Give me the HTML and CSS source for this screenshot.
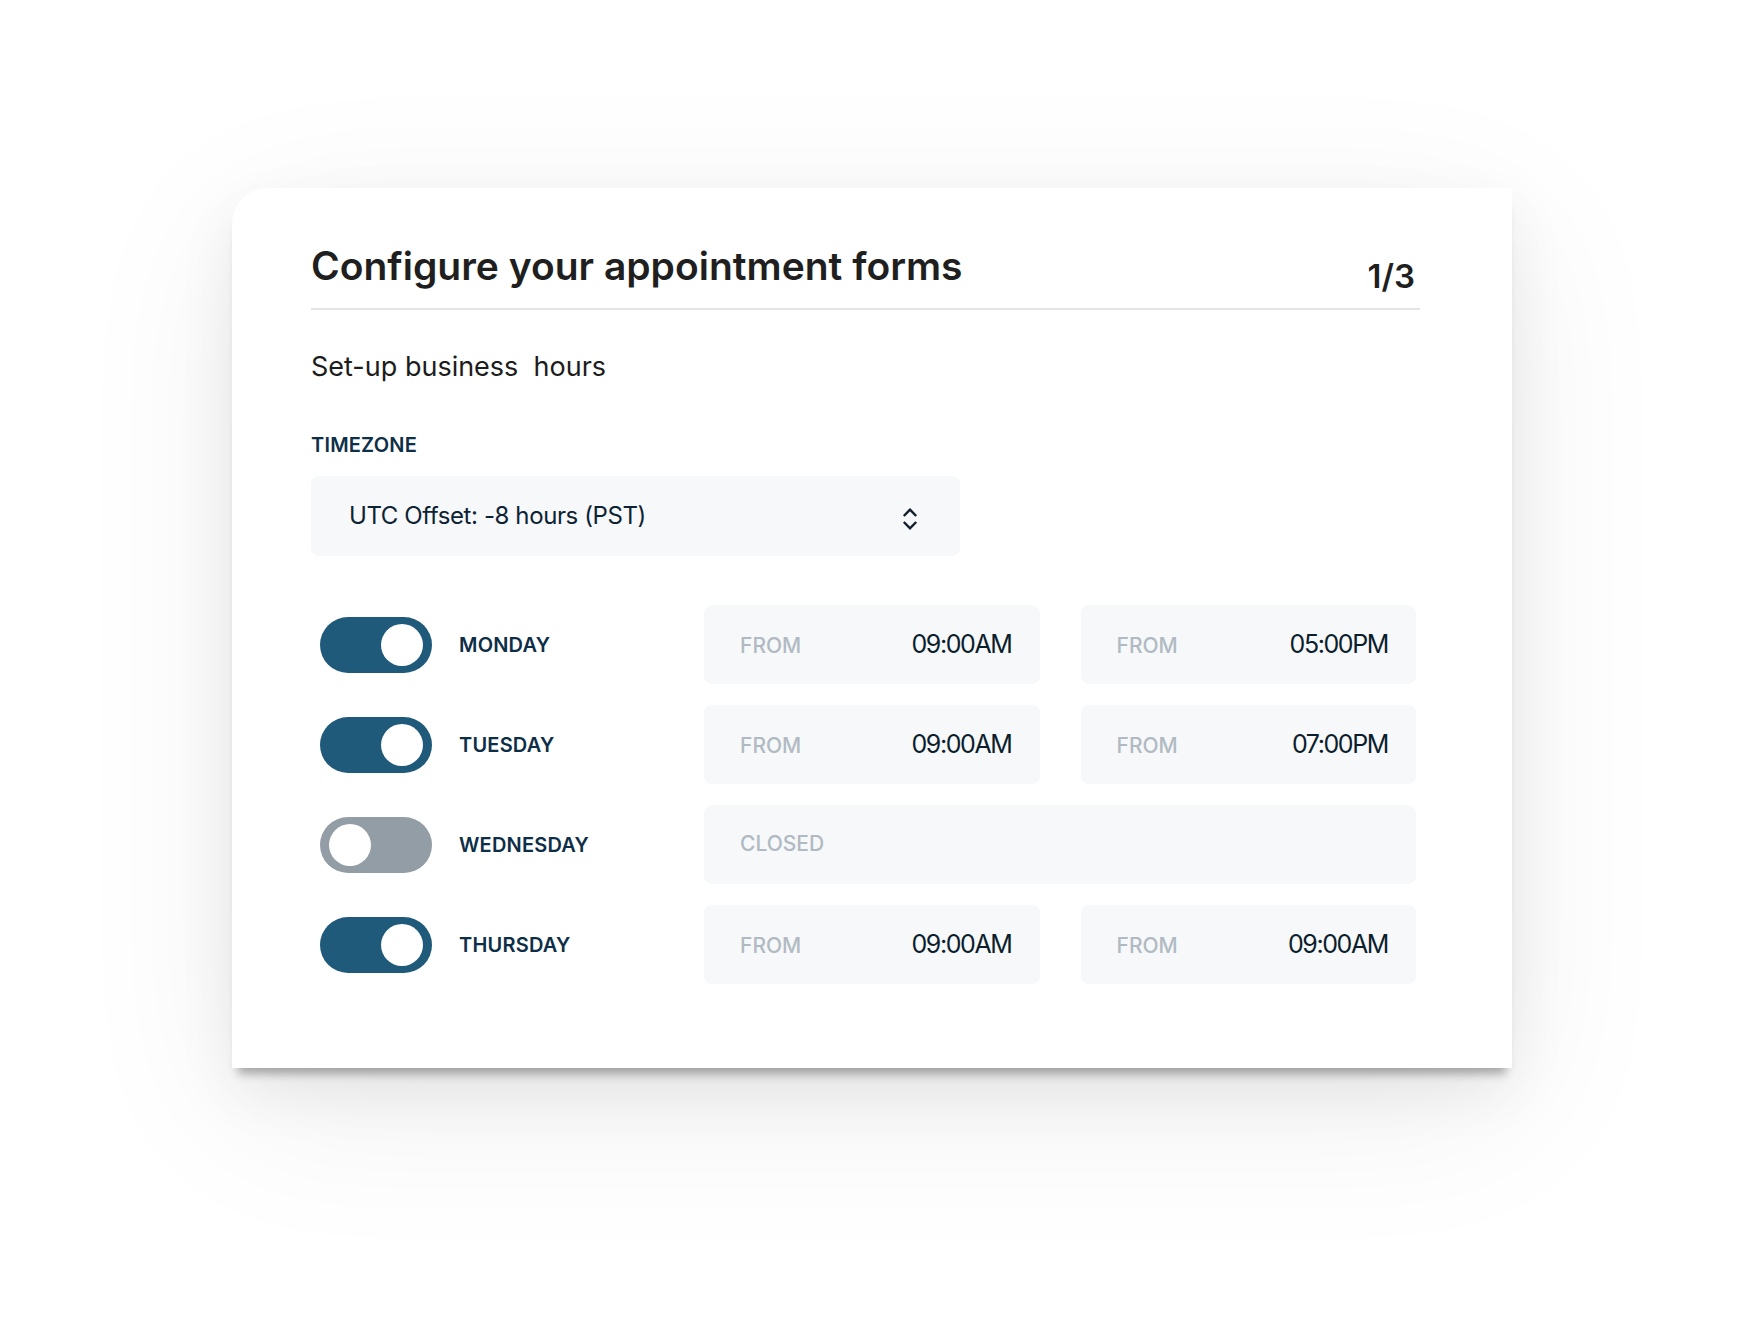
FILE: index.html
```html
<!DOCTYPE html>
<html lang="en">
<head>
<meta charset="utf-8">
<title>Configure your appointment forms</title>
<link rel="stylesheet" href="styles.css">
</head>
<body>
<main class="card">
  <header class="card-header">
    <h1 class="title">Configure your appointment forms</h1>
    <span class="step">1/3</span>
  </header>

  <h2 class="subtitle">Set-up business&nbsp; hours</h2>

  <label class="field-label">TIMEZONE</label>
  <div class="select">
    <span class="select-value">UTC Offset: -8 hours (PST)</span>
    <svg class="select-icon" width="16" height="24" viewBox="0 0 16 24" aria-hidden="true">
      <path d="M1.8 9 L8 2.6 L14.2 9" fill="none" stroke="#111d2b" stroke-width="2.4" stroke-linejoin="miter"/>
      <path d="M1.8 15 L8 21.4 L14.2 15" fill="none" stroke="#111d2b" stroke-width="2.4" stroke-linejoin="miter"/>
    </svg>
  </div>

  <section class="hours">
    <div class="day">
      <span class="toggle on"><span class="knob"></span></span>
      <span class="day-name">MONDAY</span>
    </div>
    <div class="slot"><span class="slot-label">FROM</span><span class="slot-time">09:00AM</span></div>
    <div class="slot"><span class="slot-label">FROM</span><span class="slot-time">05:00PM</span></div>

    <div class="day">
      <span class="toggle on"><span class="knob"></span></span>
      <span class="day-name">TUESDAY</span>
    </div>
    <div class="slot"><span class="slot-label">FROM</span><span class="slot-time">09:00AM</span></div>
    <div class="slot"><span class="slot-label">FROM</span><span class="slot-time">07:00PM</span></div>

    <div class="day">
      <span class="toggle off"><span class="knob"></span></span>
      <span class="day-name">WEDNESDAY</span>
    </div>
    <div class="slot closed"><span class="slot-label">CLOSED</span></div>

    <div class="day">
      <span class="toggle on"><span class="knob"></span></span>
      <span class="day-name">THURSDAY</span>
    </div>
    <div class="slot"><span class="slot-label">FROM</span><span class="slot-time">09:00AM</span></div>
    <div class="slot"><span class="slot-label">FROM</span><span class="slot-time">09:00AM</span></div>
  </section>
</main>
</body>
</html>
```

FILE: styles.css
```css
* {
  box-sizing: border-box;
}

html, body {
  margin: 0;
  padding: 0;
  background: #ffffff;
}

body {
  font-family: Inter, "Noto Sans", "Liberation Sans", sans-serif;
  padding: 188px 0 0 232px;
  min-height: 1344px;
}

.card {
  width: 1280px;
  height: 880px;
  background: #ffffff;
  border-top-left-radius: 36px;
  padding: 55px 92px 0 79px;
  box-shadow:
    0 12px 10px -6px rgba(0, 0, 0, 0.30),
    0 24px 60px rgba(0, 0, 0, 0.07),
    0 40px 170px rgba(0, 0, 0, 0.07);
}

.card-header {
  display: flex;
  justify-content: space-between;
  align-items: flex-start;
  border-bottom: 2px solid #e4e4e4;
  padding-bottom: 19px;
}

.title {
  margin: 0;
  font-size: 39px;
  line-height: 46px;
  font-weight: 600;
  letter-spacing: 0;
  color: #1f1f1f;
}

.step {
  margin-top: 13px;
  margin-bottom: -8px;
  margin-right: 5px;
  font-size: 33px;
  line-height: 40px;
  font-weight: 600;
  letter-spacing: 0;
  color: #1f1f1f;
}

.subtitle {
  margin: 41px 0 0;
  font-size: 27px;
  line-height: 32px;
  font-weight: 400;
  letter-spacing: 0;
  color: #1c1c1c;
}

.field-label {
  display: block;
  margin-top: 50px;
  font-size: 20px;
  line-height: 24px;
  font-weight: 600;
  letter-spacing: 0.2px;
  color: #0e2f48;
}

.select {
  margin-top: 19px;
  width: 649px;
  height: 80px;
  background: #f6f8fa;
  border-radius: 8px;
  display: flex;
  align-items: center;
  justify-content: space-between;
  padding: 0 42px 0 38px;
}

.select-value {
  font-size: 24px;
  line-height: 30px;
  letter-spacing: -0.4px;
  color: #0d2233;
}

.select-icon {
  display: block;
  margin-top: 6px;
}

.hours {
  margin-top: 49px;
  width: 1105px;
  display: grid;
  grid-template-columns: 352px 1fr 1fr;
  column-gap: 41px;
  row-gap: 21px;
}

.day {
  display: flex;
  align-items: center;
  padding-left: 9px;
}

.toggle {
  width: 112px;
  height: 56px;
  border-radius: 28px;
  display: flex;
  align-items: center;
  padding: 0 9px;
  flex-shrink: 0;
}

.toggle.on {
  background: #1f5a7b;
  justify-content: flex-end;
}

.toggle.off {
  background: #929da5;
  justify-content: flex-start;
}

.knob {
  width: 42px;
  height: 42px;
  border-radius: 50%;
  background: #ffffff;
}

.day-name {
  margin-left: 27px;
  font-size: 20px;
  line-height: 24px;
  font-weight: 600;
  letter-spacing: 0.2px;
  color: #0d2e47;
}

.slot {
  height: 79px;
  background: #f6f8fa;
  border-radius: 8px;
  display: flex;
  align-items: baseline;
  justify-content: space-between;
  padding: 24px 28px 0 36px;
}

.slot.closed {
  grid-column: 2 / 4;
}

.slot-label {
  font-size: 21px;
  line-height: 30px;
  font-weight: 500;
  letter-spacing: 0;
  color: #b1bac2;
}

.slot-time {
  font-size: 25px;
  line-height: 30px;
  font-weight: 400;
  letter-spacing: -1.4px;
  color: #0c1e2c;
}
```
